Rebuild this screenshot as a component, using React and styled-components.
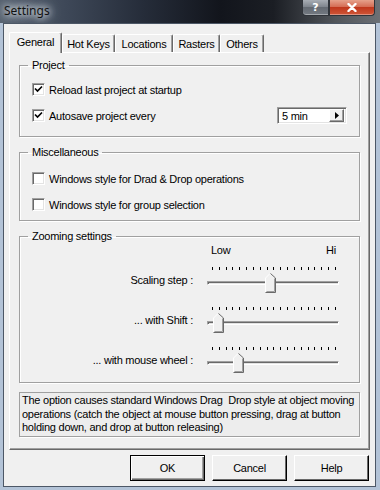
import { Fragment } from 'react';
import styled, { createGlobalStyle } from 'styled-components';

const GlobalStyle = createGlobalStyle`
    html, body {
        margin: 0;
        padding: 0;
        background: #ffffff;
    }

    body {
        font-family: "Liberation Sans", Arial, sans-serif;
        font-size: 11px;
        letter-spacing: -0.25px;
        color: #000;
    }
`

const Window = styled.div`
    width: 380px;
    height: 490px;
    display: flex;
    flex-direction: column;
    background: #b3c3d7;
    overflow: hidden;
`

const TitleBar = styled.div`
    flex: none;
    height: 23px;
    display: flex;
    justify-content: space-between;
    align-items: flex-start;
    padding: 0 5px 0 4px;
    background: linear-gradient(90deg, #56616f 0%, #3d4757 18%, #252c39 38%, #12151c 58%, #1b1e24 72%, #505459 88%, #6c7075 100%);
`

const Title = styled.span`
    font-family: "Noto Sans", "Open Sans", sans-serif;
    font-size: 12px;
    letter-spacing: 0;
    line-height: 21px;
    color: #111;
    text-shadow: 0 0 6px #eef2f6, 0 0 10px #dde4ec, 0 0 14px #c9d2dc;
`

const CaptionButtons = styled.div`
    display: flex;
`

const CaptionButton = styled.div`
    width: ${p => p.$w}px;
    height: 16px;
    display: flex;
    align-items: center;
    justify-content: center;
    box-sizing: border-box;
    border: 1px solid #30343a;
    border-top: none;
    border-radius: ${p => p.$close ? '0 0 4px 0' : '0 0 0 4px'};
    background: ${p => p.$close
        ? 'linear-gradient(#e6a18b, #d56d55 45%, #c0381d 50%, #cf5637)'
        : 'linear-gradient(#a8adb4, #80868e 45%, #656b73 50%, #737981)'};
    box-shadow: inset 0 -1px 0 rgba(255, 255, 255, 0.35);
    color: #fff;
    font-family: "DejaVu Sans", sans-serif;
    font-weight: bold;
    font-size: 11px;
    letter-spacing: 0;
`

const Client = styled.div`
    flex: 1;
    display: flex;
    flex-direction: column;
    margin: 0 4px 3px 3px;
    padding: 8px 4px 0 5px;
    background: #f0f0f0;
    border: 1px solid #4c5766;
`

const TabRow = styled.div`
    display: flex;
    align-items: flex-end;
    height: 20px;
`

const Tab = styled.div`
    position: relative;
    z-index: ${p => p.$active ? 1 : 0};
    width: ${p => p.$w}px;
    height: ${p => p.$active ? 21 : 18}px;
    margin-bottom: ${p => p.$active ? -1 : 0}px;
    box-sizing: border-box;
    display: flex;
    align-items: center;
    justify-content: center;
    padding-bottom: ${p => p.$active ? 2 : 0}px;
    background: #f0f0f0;
    border-top: 1px solid #fff;
    border-left: 1px solid #fff;
    border-right: 1px solid #696969;
    border-radius: 2px 2px 0 0;
    box-shadow: inset -1px 0 0 #a0a0a0;
`

const Panel = styled.div`
    width: 361px;
    height: 398px;
    box-sizing: border-box;
    display: flex;
    flex-direction: column;
    gap: 9px;
    padding: 6px 9px 0 9px;
    border: 1px solid;
    border-color: #fff #696969 #696969 #fff;
    box-shadow: inset -1px -1px 0 #a0a0a0;
`

const Group = styled.fieldset`
    margin: 0;
    padding: 0;
    min-width: 0;
    height: ${p => p.$h}px;
    box-sizing: border-box;
    border: 1px solid #a0a0a0;
    box-shadow: 1px 1px 0 #fff, inset 1px 1px 0 #fff;
`

const Legend = styled.legend`
    margin-left: 8px;
    padding: 0 4px;
    line-height: 13px;
`

const Options = styled.div`
    display: flex;
    flex-direction: column;
    gap: 9px;
    padding: ${p => p.$top}px 12px 0 12px;
`

const OptionRow = styled.div`
    display: flex;
    align-items: center;
    justify-content: space-between;
    height: 17px;
`

const CheckLabel = styled.label`
    display: flex;
    align-items: center;
    gap: 4px;
`

const Box = styled.span`
    width: 13px;
    height: 13px;
    box-sizing: border-box;
    display: flex;
    align-items: center;
    justify-content: center;
    background: #fff;
    border: 1px solid;
    border-color: #a0a0a0 #fff #fff #a0a0a0;
    box-shadow: inset 1px 1px 0 #696969, inset -1px -1px 0 #e3e3e3;
`

const Combo = styled.div`
    width: 70px;
    height: 17px;
    box-sizing: border-box;
    display: flex;
    align-items: center;
    justify-content: space-between;
    padding: 2px 2px 2px 4px;
    background: #fff;
    border: 1px solid;
    border-color: #a0a0a0 #fff #fff #a0a0a0;
    box-shadow: inset 1px 1px 0 #696969, inset -1px -1px 0 #e3e3e3;
`

const ComboButton = styled.span`
    width: 15px;
    height: 13px;
    box-sizing: border-box;
    display: flex;
    align-items: center;
    justify-content: center;
    background: #f0f0f0;
    border: 1px solid;
    border-color: #fff #696969 #696969 #fff;
    box-shadow: inset -1px -1px 0 #a0a0a0;
`

const SliderGrid = styled.div`
    display: grid;
    grid-template-columns: 173px 132px;
    column-gap: 14px;
    row-gap: 13px;
    align-items: center;
    padding-top: 1px;
`

const ScaleLabels = styled.div`
    grid-column: 2;
    display: flex;
    justify-content: space-between;
    padding: 0 3px 0 4px;
    line-height: 13px;
    margin-bottom: -4px;
`

const SliderLabel = styled.span`
    text-align: right;
`

const Slider = styled.div`
    position: relative;
    height: 27px;
`

const Ticks = styled.div`
    display: flex;
    justify-content: space-between;
    padding: 1px 3px 0 5px;
`

const TickMark = styled.span`
    width: 1px;
    height: 3px;
    background: #000;
`

const Track = styled.div`
    margin-top: 11px;
    height: 4px;
    box-sizing: border-box;
    background: #e3e3e3;
    border: 1px solid;
    border-color: #a0a0a0 #fff #fff #a0a0a0;
    box-shadow: inset 1px 1px 0 #696969;
`

const Thumb = styled.svg`
    position: absolute;
    top: 7px;
`

const Description = styled.div`
    height: 45px;
    box-sizing: border-box;
    padding: 1px 2px;
    line-height: 13.5px;
    background: #ededed;
    border: 1px solid #a0a0a0;
    box-shadow: 1px 1px 0 #fff;
    white-space: nowrap;
`

const ButtonRow = styled.div`
    display: flex;
    justify-content: flex-end;
    gap: 7px;
    margin-top: 5px;
    padding-right: 1px;
    width: 361px;
    box-sizing: border-box;
`

const Button = styled.div`
    width: 75px;
    height: 26px;
    box-sizing: border-box;
    display: flex;
    align-items: center;
    justify-content: center;
    background: #f0f0f0;
    border: 1px solid;
    border-color: ${p => p.$default ? '#000' : '#fff #000 #000 #fff'};
    box-shadow: ${p => p.$default
        ? 'inset 1px 1px 0 #fff, inset -1px -1px 0 #696969, inset -2px -2px 0 #a0a0a0'
        : 'inset -1px -1px 0 #696969, inset 1px 1px 0 #f0f0f0'};
`

const tabs = [
    { label: 'General', w: 53, active: true },
    { label: 'Hot Keys', w: 53 },
    { label: 'Locations', w: 58 },
    { label: 'Rasters', w: 47 },
    { label: 'Others', w: 44 },
]

const sliders = [
    { label: 'Scaling step :', pos: 58 },
    { label: '... with Shift :', pos: 6 },
    { label: '... with mouse wheel :', pos: 26 },
]

const Check = ({ checked }) => (
    <Box>
        {checked && (
            <svg width="9" height="9" viewBox="0 0 9 9">
                <path d="M1 3.5 L3.5 6 L8 1.5" fill="none" stroke="#000" strokeWidth="1.7" />
            </svg>
        )}
    </Box>
)

const TrackBar = ({ pos }) => (
    <Slider>
        <Ticks>
            {Array.from({ length: 19 }).map((_, i) => <TickMark key={i} />)}
        </Ticks>
        <Track />
        <Thumb width="11" height="20" viewBox="0 0 11 20" style={{ left: pos }}>
            <path d="M0.5 19.5 V5 L5.5 0.5 L10.5 5 V19.5 Z" fill="#f0f0f0" />
            <path d="M0.5 19 V5 L5 0.5" fill="none" stroke="#fff" />
            <path d="M5.5 0.5 L10.5 5 V19.5 H0.5" fill="none" stroke="#696969" />
            <path d="M9.5 5.5 V18.5 H1.5" fill="none" stroke="#a0a0a0" />
        </Thumb>
    </Slider>
)

const App = () => {
    return (
        <>
            <GlobalStyle />
            <Window>
                <TitleBar>
                    <Title>Settings</Title>
                    <CaptionButtons>
                        <CaptionButton $w={27}>?</CaptionButton>
                        <CaptionButton $w={46} $close>
                            <svg width="10" height="9" viewBox="0 0 10 9">
                                <path d="M1.5 1 L8.5 8 M8.5 1 L1.5 8" stroke="#fff" strokeWidth="2.4" strokeLinecap="round" />
                            </svg>
                        </CaptionButton>
                    </CaptionButtons>
                </TitleBar>
                <Client>
                    <TabRow>
                        {tabs.map(t => (
                            <Tab key={t.label} $w={t.w} $active={t.active}>{t.label}</Tab>
                        ))}
                    </TabRow>
                    <Panel>
                        <Group $h={78}>
                            <Legend>Project</Legend>
                            <Options $top={9}>
                                <OptionRow>
                                    <CheckLabel><Check checked />Reload last project at startup</CheckLabel>
                                </OptionRow>
                                <OptionRow>
                                    <CheckLabel><Check checked />Autosave project every</CheckLabel>
                                    <Combo>
                                        5 min
                                        <ComboButton>
                                            <svg width="4" height="7" viewBox="0 0 4 7">
                                                <path d="M0 0 L4 3.5 L0 7 Z" fill="#000" />
                                            </svg>
                                        </ComboButton>
                                    </Combo>
                                </OptionRow>
                            </Options>
                        </Group>
                        <Group $h={75}>
                            <Legend>Miscellaneous</Legend>
                            <Options $top={11}>
                                <OptionRow>
                                    <CheckLabel><Check />Windows style for Drad &amp; Drop operations</CheckLabel>
                                </OptionRow>
                                <OptionRow>
                                    <CheckLabel><Check />Windows style for group selection</CheckLabel>
                                </OptionRow>
                            </Options>
                        </Group>
                        <Group $h={153}>
                            <Legend>Zooming settings</Legend>
                            <SliderGrid>
                                <ScaleLabels><span>Low</span><span>Hi</span></ScaleLabels>
                                {sliders.map(s => (
                                    <Fragment key={s.label}>
                                        <SliderLabel>{s.label}</SliderLabel>
                                        <TrackBar pos={s.pos} />
                                    </Fragment>
                                ))}
                            </SliderGrid>
                        </Group>
                        <Description>
                            The option causes standard Windows Drag{'\u00a0'} Drop style at object moving<br />
                            operations (catch the object at mouse button pressing, drag at button<br />
                            holding down, and drop at button releasing)
                        </Description>
                    </Panel>
                    <ButtonRow>
                        <Button $default>OK</Button>
                        <Button>Cancel</Button>
                        <Button>Help</Button>
                    </ButtonRow>
                </Client>
            </Window>
        </>
    )
}

export default App;
